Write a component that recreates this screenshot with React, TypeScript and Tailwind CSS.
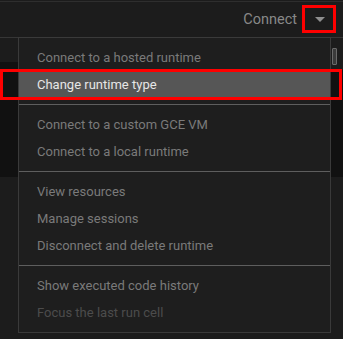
import React from 'react';

type Item = { label: string; tone: 'normal' | 'active' | 'dim' };

const groups: Item[][] = [
  [
    { label: 'Connect to a hosted runtime', tone: 'normal' },
    { label: 'Change runtime type', tone: 'active' },
  ],
  [
    { label: 'Connect to a custom GCE VM', tone: 'normal' },
    { label: 'Connect to a local runtime', tone: 'normal' },
  ],
  [
    { label: 'View resources', tone: 'normal' },
    { label: 'Manage sessions', tone: 'normal' },
    { label: 'Disconnect and delete runtime', tone: 'normal' },
  ],
  [
    { label: 'Show executed code history', tone: 'normal' },
    { label: 'Focus the last run cell', tone: 'dim' },
  ],
];

const MenuItem: React.FC<{ item: Item }> = ({ item }) => (
  <div
    className={
      item.tone === 'active'
        ? 'flex h-[27px] items-center border-y border-dotted border-[#777] bg-[#565656] pl-[18px] text-[#e6e6e6]'
        : item.tone === 'dim'
        ? 'flex h-[27px] items-center pl-[18px] text-[#4c4c4c]'
        : 'flex h-[27px] items-center pl-[18px] text-[#7a7a7a]'
    }
  >
    {item.label}
  </div>
);

export default function App() {
  return (
    <div
      className="relative h-[339px] w-[343px] overflow-hidden bg-[#1c1c1c]"
      style={{ fontFamily: 'Roboto, "Noto Sans", sans-serif' }}
    >
      {/* top toolbar */}
      <div className="h-[38px] border-b border-[#363636] pt-px">
        <div className="flex h-full items-center justify-end border-t border-[#2e2e2e] pr-[8px]">
          <span className="text-[14.5px] text-[#888888]">Connect</span>
          <div className="ml-[8px] flex h-[26px] w-[30px] items-center justify-center">
            <svg width="10" height="5" viewBox="0 0 10 5">
              <path d="M0 0h10L5 5z" fill="#8f8f8f" />
            </svg>
          </div>
        </div>
      </div>

      {/* notebook content behind the menu */}
      <div className="h-[24px]" />
      <div className="flex h-[115px]">
        <div className="w-[20px] bg-[#111111]" />
        <div className="flex-1" />
        <div className="flex w-[12px] flex-col">
          <div className="h-[8px]" />
          <div className="flex-1 bg-[#111111]" />
        </div>
      </div>

      {/* scroll glyph at right */}
      <div className="absolute left-[332px] top-[48px] h-[17px] w-[5px] rounded-[1px] border border-[#6a6a6a] bg-[#3a3a3a]" />

      {/* dropdown menu */}
      <div className="absolute left-[18px] top-[37px] w-[313px] border border-[#3a3a3a] bg-[#1e1e1e] pb-[6px] pt-[6px] text-[13px]">
        {groups.map((group, gi) => (
          <React.Fragment key={gi}>
            {gi > 0 && <div className="my-[6px] h-px bg-[#5e5e5e]" />}
            {group.map((item) => (
              <MenuItem key={item.label} item={item} />
            ))}
          </React.Fragment>
        ))}
      </div>

      {/* annotation boxes */}
      <div className="absolute left-[302px] top-[5px] h-[28px] w-[34px] border-[3px] border-[#ff0000]" />
      <div className="absolute left-0 top-[69px] h-[31px] w-[342px] border-[3px] border-[#ff0000]" />
    </div>
  );
}
